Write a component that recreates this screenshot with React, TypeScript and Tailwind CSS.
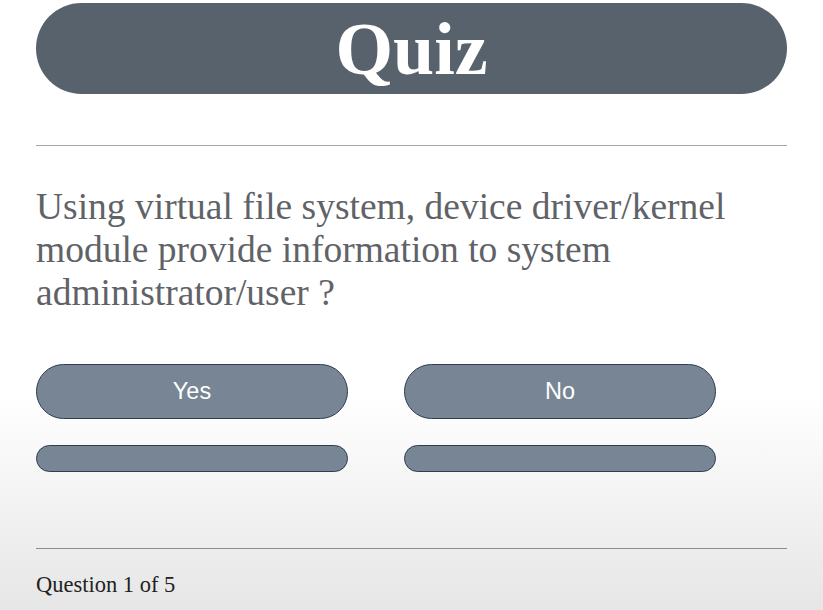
const options = ["Yes", "No", "", ""]

export default function App() {
  return (
    <div className="min-h-[610px] bg-[linear-gradient(to_bottom,#ffffff_0%,#ffffff_65%,#e6e6e6_100%)] px-9 pt-[3px] font-['Liberation_Serif',serif]">
      <div className="flex h-[91px] items-center justify-center rounded-[46px] bg-[#58626c]">
        <h1 className="text-[74px] font-bold leading-none text-white">Quiz</h1>
      </div>

      <hr className="mt-[51px] border-t border-[#a6a6a6]" />

      <p className="mt-[39px] text-[37.5px] leading-[43px] text-[#5f6368]">
        Using virtual file system, device driver/kernel module provide information to system
        administrator/user ?
      </p>

      <div className="mt-[50px] grid w-[680px] grid-cols-[312px_312px] gap-x-[56px] gap-y-[26px]">
        {options.map((option, i) => (
          <button
            key={i}
            className={`rounded-full border border-[#2c3e50] bg-[#778594] font-['Liberation_Sans',sans-serif] text-[23.5px] text-white ${
              i < 2 ? "h-[55px]" : "h-[27px]"
            }`}
          >
            {option}
          </button>
        ))}
      </div>

      <hr className="mt-[76px] border-t border-[#8c8c8c]" />

      <p className="mt-[22px] text-[22.5px] leading-[28px] text-[#222222]">Question 1 of 5</p>
    </div>
  )
}
